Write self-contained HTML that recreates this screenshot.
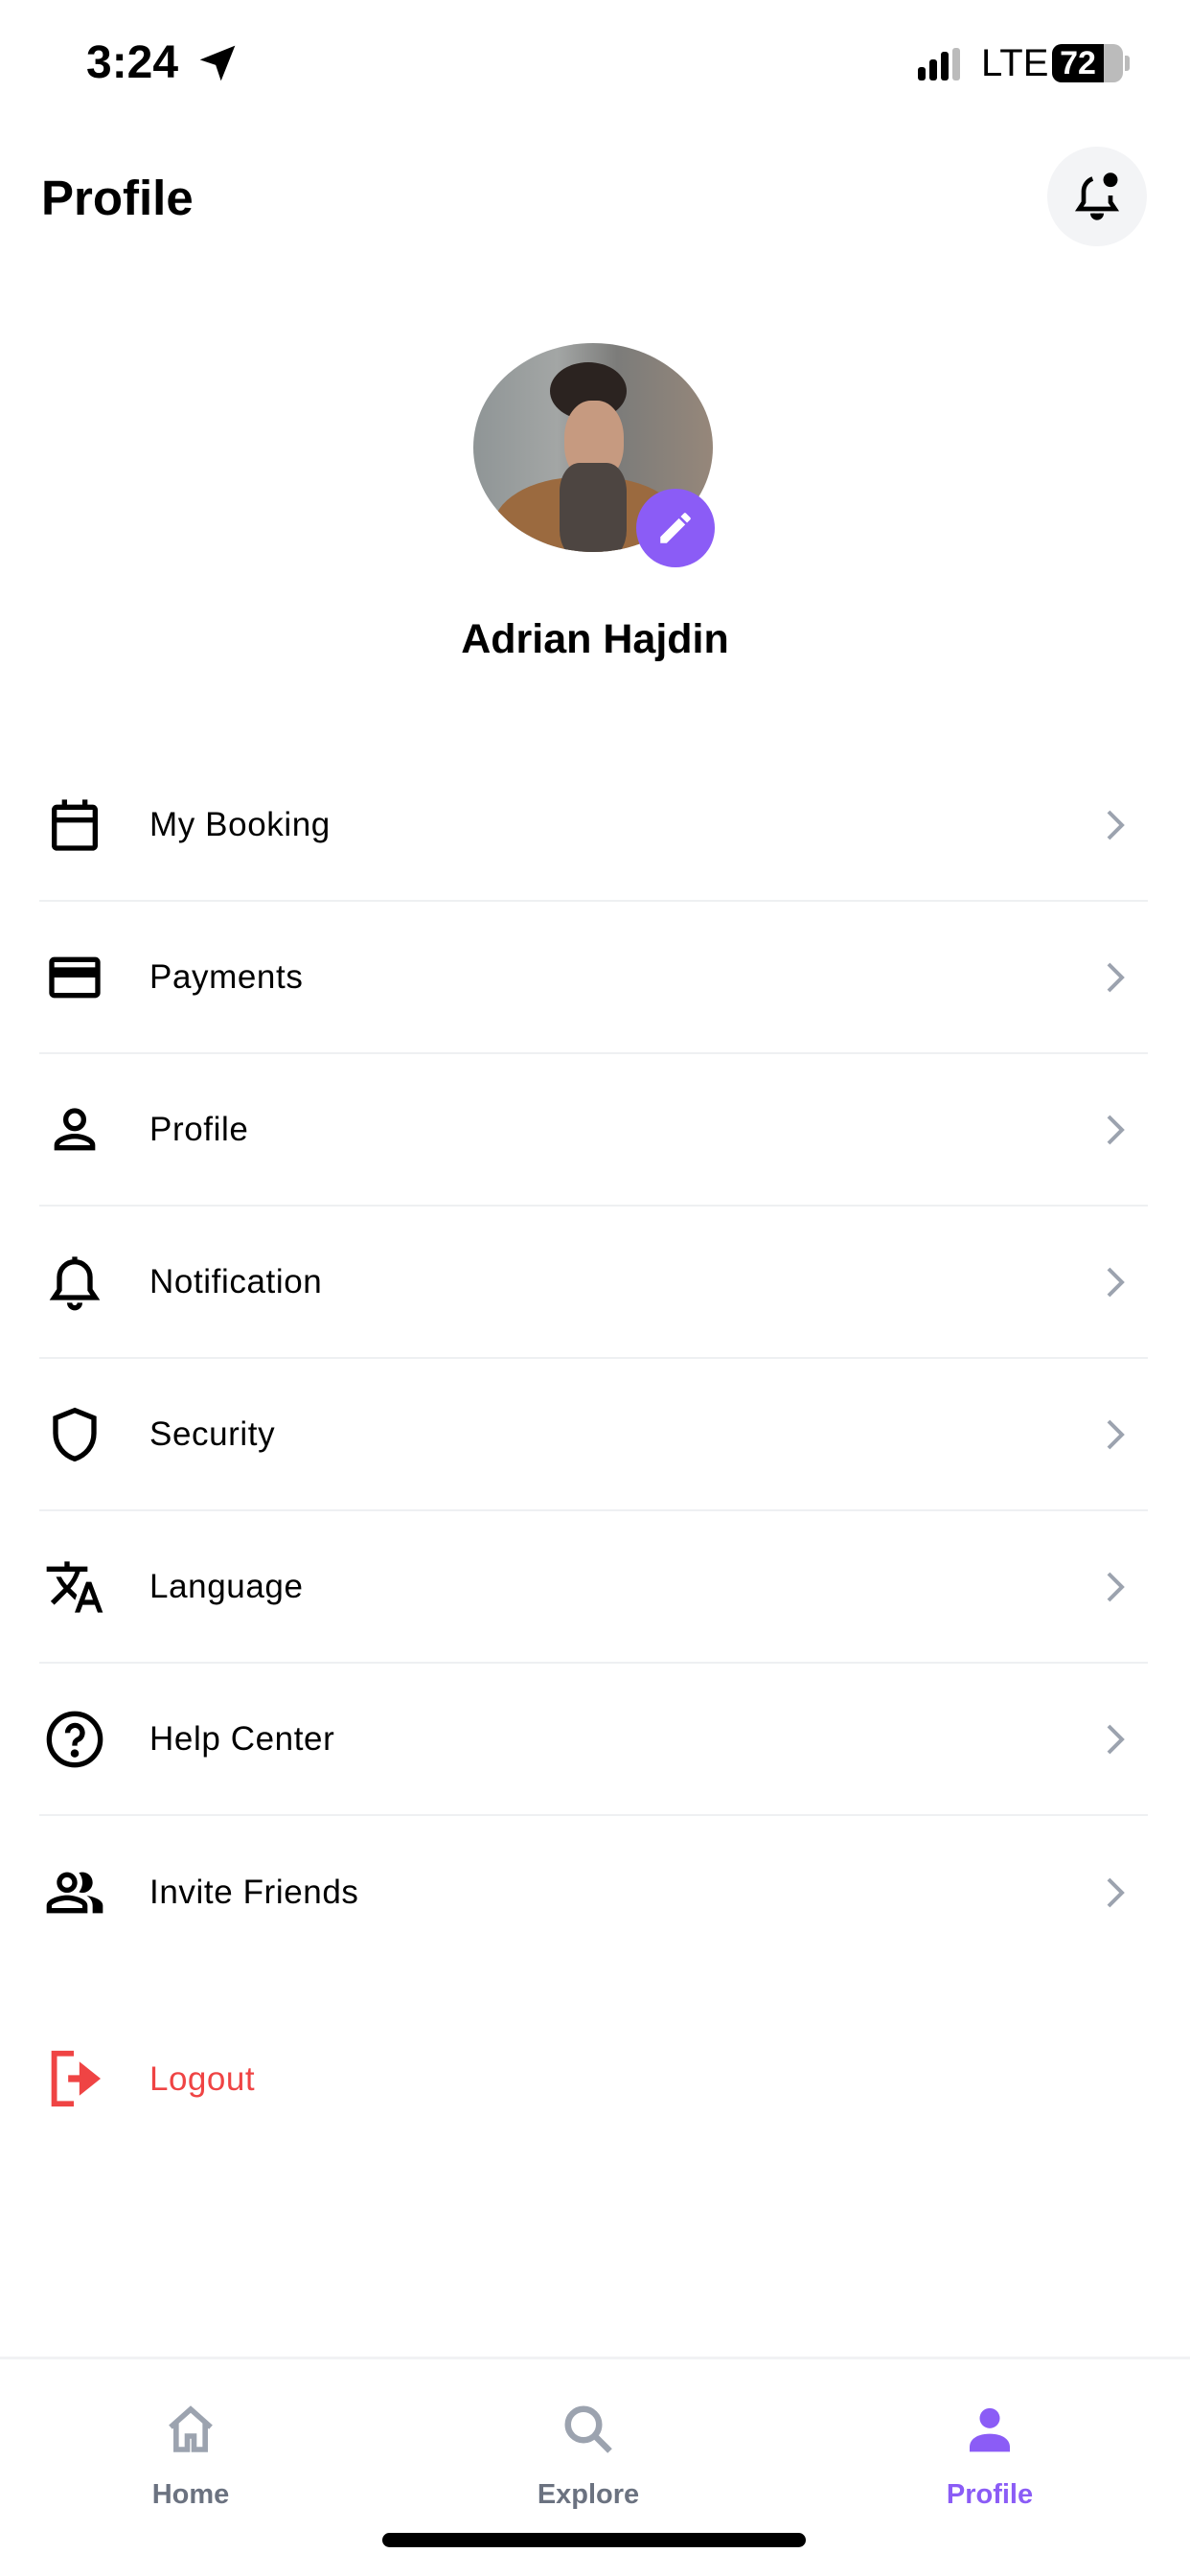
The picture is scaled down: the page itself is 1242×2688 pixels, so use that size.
<!DOCTYPE html>
<html><head><meta charset="utf-8"><style>
*{margin:0;padding:0;box-sizing:border-box}
body{width:1242px;height:2688px;background:#fff;font-family:"Liberation Sans",sans-serif;position:relative;overflow:hidden;color:#000}
.abs{position:absolute}
.row{position:absolute;left:41px;width:1157px;height:159px;border-bottom:2px solid #eef0f2}
.row .ic{position:absolute;left:5px;top:50%;transform:translateY(-50%);width:64px;height:64px}
.row .t{position:absolute;left:115px;top:50%;transform:translateY(-50%);font-size:35px;letter-spacing:0.6px}
.row .ch{position:absolute;right:19px;top:50%;transform:translateY(-50%);width:30px;height:40px}
.tab{position:absolute;text-align:center;font-weight:bold;font-size:29px;color:#6b7280;width:200px}
</style></head><body>
<div class="abs" style="left:90px;top:38px;font-size:48px;font-weight:bold">3:24</div>
<svg class="abs" style="left:205px;top:44px" width="44" height="44" viewBox="0 0 24 24"><path d="M22 2 L2 10 L11 13 L14 22 Z" fill="#000"/></svg>
<svg class="abs" style="left:958px;top:50px" width="52" height="36" viewBox="0 0 52 36"><g fill="#000"><rect x="0" y="20" width="8" height="14" rx="3"/><rect x="12" y="12" width="8" height="22" rx="3"/></g><g fill="#000"><rect x="24" y="4" width="8" height="30" rx="3"/></g><rect x="36" y="0" width="8" height="34" rx="3" fill="#bbb"/></svg>
<div class="abs" style="left:1024px;top:44px;font-size:40px;">LTE</div>
<div class="abs" style="left:1098px;top:46px;width:74px;height:40px;border-radius:10px;background:#bbb;overflow:hidden"><div style="width:54px;height:40px;background:#000;color:#fff;font-weight:bold;font-size:34px;text-align:center;line-height:40px">72</div></div>
<div class="abs" style="left:1174px;top:58px;width:5px;height:16px;background:#bbb;border-radius:0 3px 3px 0"></div>

<div class="abs" style="left:43px;top:177px;font-size:51px;font-weight:bold">Profile</div>
<div class="abs" style="left:1093px;top:153px;width:104px;height:104px;border-radius:50%;background:#f3f4f6"></div>
<svg class="abs" style="left:1117px;top:176px" width="56" height="56" viewBox="0 0 24 24" fill="none" stroke="#000" stroke-width="2"><path d="M10 4.5 A6 6 0 0 0 6 10 V15 L4 18 H20 L18 15 V12"/><path d="M10 20 a2 2 0 0 0 4 0" fill="#000"/><circle cx="18" cy="5" r="3.2" fill="#000" stroke="none"/></svg>

<div class="abs" style="left:494px;top:358px;width:250px;height:218px;border-radius:50%;overflow:hidden;background:linear-gradient(90deg,#8f9596 0%,#a3a6a5 35%,#7c7c7a 60%,#96877a 100%)">
<div class="abs" style="left:80px;top:20px;width:80px;height:60px;border-radius:50%;background:#2b2320"></div>
<div class="abs" style="left:95px;top:60px;width:62px;height:85px;border-radius:45%;background:#c69a80"></div>
<div class="abs" style="left:20px;top:140px;width:200px;height:120px;border-radius:45% 45% 0 0;background:#9b6a3f"></div>
<div class="abs" style="left:90px;top:125px;width:70px;height:100px;border-radius:30%;background:#4d4541"></div>
</div>
<div class="abs" style="left:664px;top:510px;width:82px;height:82px;border-radius:50%;background:#8b5cf6"></div>
<svg class="abs" style="left:684px;top:530px" width="42" height="42" viewBox="0 0 24 24"><path d="M3 17.25V21h3.75L17.81 9.94l-3.75-3.75L3 17.25zM20.71 7.04a1 1 0 0 0 0-1.41l-2.34-2.34a1 1 0 0 0-1.41 0l-1.83 1.83 3.75 3.75 1.83-1.83z" fill="#fff"/></svg>
<div class="abs" style="left:0;width:1242px;top:643px;text-align:center;font-size:43px;font-weight:bold">Adrian Hajdin</div>

<div class="row" style="top:782px"><svg class="ic" viewBox="0 0 24 24" fill="none" stroke="#000" stroke-width="2"><rect x="4" y="5" width="16" height="16" rx="1"/><path d="M4 10H20M8 2V6M16 2V6"/></svg><div class="t">My Booking</div><svg class="ch" viewBox="0 0 30 40"><path d="M8 6 L22 20 L8 34" fill="none" stroke="#9ca3af" stroke-width="4"/></svg></div>
<div class="row" style="top:941px"><svg class="ic" viewBox="0 0 24 24"><path d="M20 4H4c-1.1 0-2 .9-2 2v12c0 1.1.9 2 2 2h16c1.1 0 2-.9 2-2V6c0-1.1-.9-2-2-2zm0 14H4v-6h16v6zm0-10H4V6h16v2z"/></svg><div class="t">Payments</div><svg class="ch" viewBox="0 0 30 40"><path d="M8 6 L22 20 L8 34" fill="none" stroke="#9ca3af" stroke-width="4"/></svg></div>
<div class="row" style="top:1100px"><svg class="ic" viewBox="0 0 24 24" fill="none" stroke="#000" stroke-width="2"><circle cx="12" cy="8" r="3.5"/><path d="M5 19v-1c0-2 4-3.5 7-3.5s7 1.5 7 3.5v1z"/></svg><div class="t">Profile</div><svg class="ch" viewBox="0 0 30 40"><path d="M8 6 L22 20 L8 34" fill="none" stroke="#9ca3af" stroke-width="4"/></svg></div>
<div class="row" style="top:1259px"><svg class="ic" viewBox="0 0 24 24" fill="none" stroke="#000" stroke-width="2"><path d="M12 4a6 6 0 0 0-6 6v5l-2 3h16l-2-3v-5a6 6 0 0 0-6-6zM12 2v2"/><path d="M10 20a2 2 0 0 0 4 0"/></svg><div class="t">Notification</div><svg class="ch" viewBox="0 0 30 40"><path d="M8 6 L22 20 L8 34" fill="none" stroke="#9ca3af" stroke-width="4"/></svg></div>
<div class="row" style="top:1418px"><svg class="ic" viewBox="0 0 24 24" fill="none" stroke="#000" stroke-width="2"><path d="M12 2.5L4.5 5.5v6c0 5 3.3 8.6 7.5 10 4.2-1.4 7.5-5 7.5-10v-6z"/></svg><div class="t">Security</div><svg class="ch" viewBox="0 0 30 40"><path d="M8 6 L22 20 L8 34" fill="none" stroke="#9ca3af" stroke-width="4"/></svg></div>
<div class="row" style="top:1577px"><svg class="ic" viewBox="0 0 24 24"><path d="M12.87 15.07l-2.54-2.51.03-.03A17.52 17.52 0 0 0 14.070 6H17V4h-7V2H8v2H1v2h11.17C11.5 7.920 10.44 9.75 9 11.35 8.07 10.32 7.3 9.19 6.69 8h-2c.73 1.63 1.73 3.17 2.98 4.56l-5.09 5.02L4 19l5-5 3.11 3.11.76-2.04zM18.5 10h-2L12 22h2l1.12-3h4.75L21 22h2l-4.5-12zm-2.62 7l1.62-4.33L19.12 17h-3.24z"/></svg><div class="t">Language</div><svg class="ch" viewBox="0 0 30 40"><path d="M8 6 L22 20 L8 34" fill="none" stroke="#9ca3af" stroke-width="4"/></svg></div>
<div class="row" style="top:1736px"><svg class="ic" viewBox="0 0 24 24" fill="none" stroke="#000" stroke-width="2"><circle cx="12" cy="12" r="10"/><path d="M9.2 9.5a2.9 2.9 0 1 1 4 2.6c-.8.4-1.2 1-1.2 1.9v.5"/><circle cx="12" cy="17.5" r="0.6" fill="#000"/></svg><div class="t">Help Center</div><svg class="ch" viewBox="0 0 30 40"><path d="M8 6 L22 20 L8 34" fill="none" stroke="#9ca3af" stroke-width="4"/></svg></div>
<div class="row" style="top:1895px;border-bottom:none"><svg class="ic" viewBox="0 0 24 24"><path d="M16.67 13.13C18.04 14.06 19 15.32 19 17v3h4v-3c0-2.18-3.57-3.470-6.33-3.87zM15 12c2.21 0 4-1.79 4-4s-1.79-4-4-4c-.47 0-.91.1-1.33.24a5.98 5.98 0 0 1 0 7.52c.42.14.86.24 1.33.24zm-6 0c2.21 0 4-1.79 4-4s-1.79-4-4-4-4 1.79-4 4 1.79 4 4 4zm0-6c1.1 0 2 .9 2 2s-.9 2-2 2-2-.9-2-2 .9-2 2-2zm0 7c-2.67 0-8 1.34-8 4v3h16v-3c0-2.66-5.33-4-8-4zm6 5H3v-.99C3.2 16.29 6.3 15 9 15s5.8 1.29 6 2v1z"/></svg><div class="t">Invite Friends</div><svg class="ch" viewBox="0 0 30 40"><path d="M8 6 L22 20 L8 34" fill="none" stroke="#9ca3af" stroke-width="4"/></svg></div>

<svg class="abs" style="left:42px;top:2134px" width="70" height="70" viewBox="0 0 24 24" fill="none" stroke="#ef4444" stroke-width="2"><path d="M12 3H5v18h7"/><path d="M10 12h7" stroke-width="2.5"/><path d="M15 8l5 4-5 4z" fill="#ef4444"/></svg>
<div class="abs" style="left:156px;top:2150px;font-size:35px;color:#ef4444;letter-spacing:0.5px">Logout</div>

<div class="abs" style="left:0;top:2459px;width:1242px;height:3px;background:#f1f2f4"></div>
<svg class="abs" style="left:170px;top:2507px" width="58" height="56" viewBox="0 0 24 24" fill="none" stroke="#9ca3af" stroke-width="2.4"><path d="M3 11L12 3l9 8M5.5 9v12h5v-6h3v6h5V9"/></svg>
<svg class="abs" style="left:584px;top:2505px" width="60" height="60" viewBox="0 0 24 24" fill="none" stroke="#9ca3af" stroke-width="2.6"><circle cx="10" cy="10" r="6.5"/><path d="M15 15l6 6"/></svg>
<svg class="abs" style="left:1005px;top:2507px" width="56" height="56" viewBox="0 0 24 24" fill="#8b5cf6"><circle cx="12" cy="7" r="4.5"/><path d="M3 22v-2c0-4 4-6 9-6s9 2 9 6v2z"/></svg>
<div class="tab" style="left:99px;top:2587px">Home</div>
<div class="tab" style="left:514px;top:2587px">Explore</div>
<div class="tab" style="left:933px;top:2587px;color:#8b5cf6">Profile</div>
<div class="abs" style="left:399px;top:2643px;width:442px;height:15px;border-radius:8px;background:#000"></div>
</body></html>
